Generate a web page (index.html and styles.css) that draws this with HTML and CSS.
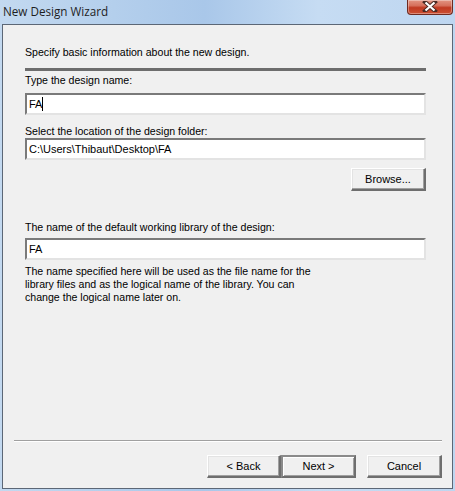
FILE: index.html
```html
<!DOCTYPE html>
<html>
<head>
<meta charset="utf-8">
<link rel="stylesheet" href="styles.css">
</head>
<body>
<div class="window">
  <div class="titlebar">
    <span class="title">New Design Wizard</span>
    <div class="close">
      <svg width="16" height="11" viewBox="0 0 16 11">
        <path d="M3 1 L13 10 M13 1 L3 10" stroke="#4a2a24" stroke-width="4" fill="none" stroke-linecap="square"/>
        <path d="M3.5 1.5 L12.5 9.5 M12.5 1.5 L3.5 9.5" stroke="#ffffff" stroke-width="2.2" fill="none"/>
      </svg>
    </div>
  </div>
  <div class="client">
    <div class="main">
      <p class="intro">Specify basic information about the new design.</p>
      <div class="rule"></div>
      <label class="lbl l1">Type the design name:</label>
      <div class="field f1"><span>FA</span><span class="caret"></span></div>
      <label class="lbl l2">Select the location of the design folder:</label>
      <div class="field f2"><span>C:\Users\Thibaut\Desktop\FA</span></div>
      <div class="browse-row"><div class="btn browse">Browse...</div></div>
      <label class="lbl l3">The name of the default working library of the design:</label>
      <div class="field f3"><span>FA</span></div>
      <p class="desc">The name specified here will be used as the file name for the<br>library files and as the logical name of the library. You can<br>change the logical name later on.</p>
    </div>
    <div class="footer">
      <div class="sep"></div>
      <div class="buttons">
        <div class="btn back">&lt; Back</div>
        <div class="btn next">Next &gt;</div>
        <div class="btn cancel">Cancel</div>
      </div>
    </div>
  </div>
</div>
</body>
</html>
```

FILE: styles.css
```css
html, body {
  margin: 0;
  padding: 0;
  width: 455px;
  height: 491px;
  overflow: hidden;
}
.window {
  width: 455px;
  height: 491px;
  box-sizing: border-box;
  background: linear-gradient(90deg, #c3d9f0 0%, #b4cfec 25%, #a9c7e9 45%, #c6dcf3 70%, #bed6f0 100%);
  padding: 0 2px 2px 2px;
  display: flex;
  flex-direction: column;
}
.titlebar {
  height: 24px;
  display: flex;
  align-items: flex-start;
  justify-content: space-between;
  flex-shrink: 0;
}
.title {
  font-family: "Open Sans", "Noto Sans", sans-serif;
  font-size: 11.7px;
  color: #1e1e1e;
  padding: 3px 0 0 1px;
  line-height: 16px;
}
.close {
  width: 46px;
  height: 15px;
  margin-right: 0;
  box-sizing: border-box;
  border: 1px solid #6e2a20;
  border-top: none;
  border-radius: 0 0 4px 4px;
  background: linear-gradient(180deg, #e29583 0%, #d6705c 40%, #c03a22 55%, #cc5033 100%);
  display: flex;
  align-items: center;
  justify-content: center;
  box-shadow: inset 0 0 0 1px rgba(255,255,255,0.35);
}
.close svg { display: block; margin-top: -1px; }
.client {
  flex: 1;
  border: 1px solid #5c6776;
  background: #f0f0f0;
  display: flex;
  flex-direction: column;
  font-family: "Liberation Sans", Arial, sans-serif;
  font-size: 10.6px;
  color: #000;
}
.main {
  flex: 1;
  padding: 21px 26px 0 22px;
  display: flex;
  flex-direction: column;
}
.intro {
  margin: 0;
  line-height: 13px;
}
.rule {
  height: 3px;
  background: #6d6d6d;
  margin-top: 9px;
}
.lbl {
  display: block;
  line-height: 13px;
}
.l1 { margin-top: 3px; }
.l2 { margin-top: 10px; }
.l3 { margin-top: 30px; }
.field {
  height: 22px;
  box-sizing: border-box;
  background: #fff;
  border-top: 2px solid #7a7a7a;
  border-left: 2px solid #7a7a7a;
  border-right: 2px solid #e3e3e3;
  border-bottom: 2px solid #e3e3e3;
  padding: 0 2px;
  display: flex;
  align-items: center;
  line-height: 13px;
  font-size: 11px;
}
.f1 { margin-top: 6px; }
.f2 { margin-top: 0; }
.f3 { margin-top: 4px; }
.caret {
  width: 1px;
  height: 14px;
  background: #000;
}
.browse-row {
  display: flex;
  justify-content: flex-end;
  margin-top: 8px;
}
.btn {
  height: 23px;
  box-sizing: border-box;
  background: #f0f0f0;
  border-top: 1px solid #ffffff;
  border-left: 1px solid #ffffff;
  border-right: 2px solid #6e6e6e;
  border-bottom: 2px solid #6e6e6e;
  box-shadow: inset -1px -1px 0 #a0a0a0, inset 1px 1px 0 #e3e3e3;
  display: flex;
  align-items: center;
  justify-content: center;
  line-height: 13px;
  font-size: 11px;
}
.browse { width: 75px; }
.desc {
  margin: 5px 0 0 0;
  line-height: 13px;
}
.footer {
  padding: 0 10px 10px 11px;
}
.sep {
  height: 1px;
  background: #a0a0a0;
  border-bottom: 1px solid #ffffff;
}
.buttons {
  display: flex;
  justify-content: flex-end;
  margin-top: 13px;
}
.back { width: 74px; }
.next {
  width: 75px;
  border: 2px solid #6e6e6e;
  border-top-color: #8a8a8a;
  border-left-color: #8a8a8a;
  box-shadow: inset 1px 1px 0 #ffffff, inset -1px -1px 0 #a0a0a0;
}
.cancel { width: 75px; margin-left: 11px; }
```
